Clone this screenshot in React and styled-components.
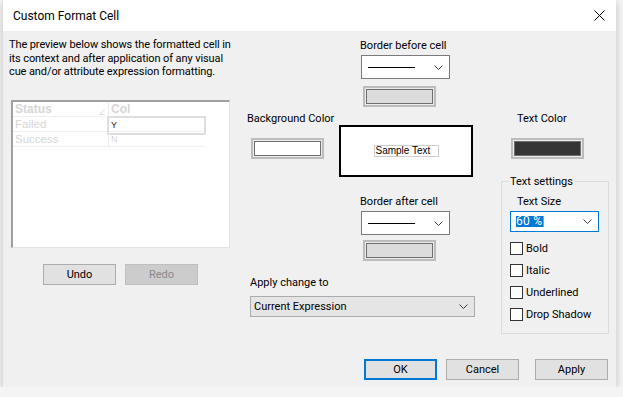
import React from 'react';
import styled, { createGlobalStyle } from 'styled-components';

const Global = createGlobalStyle`
  html, body { margin: 0; padding: 0; background: #f4f4f4; }
  body { font-family: Roboto, "Liberation Sans", sans-serif; font-size: 11px; color: #000; }
  * { box-sizing: border-box; }
`;

const Window = styled.div`
  margin-left: 3px;
  width: 613px;
  height: 387px;
  background: #f0f0f0;
  display: flex;
  flex-direction: column;
  box-shadow: 0 2px 8px rgba(0, 0, 0, 0.22);
`;

const TitleBar = styled.div`
  height: 31px;
  flex: none;
  background: #fff;
  display: flex;
  align-items: center;
  justify-content: space-between;
  padding: 0 11px 0 10px;
  font-size: 12px;
`;

const Body = styled.div`
  flex: 1;
  display: flex;
  flex-direction: column;
`;

const Main = styled.div`
  display: flex;
`;

const LeftPanel = styled.div`
  width: 243px;
  display: flex;
  flex-direction: column;
  padding-left: 6px;
`;

const Intro = styled.div`
  margin-top: 7px;
  line-height: 13.5px;
  white-space: nowrap;
  letter-spacing: -0.1px;
`;

const GridBox = styled.div`
  margin: 21px 0 0 2px;
  width: 219px;
  height: 148px;
  background: #fff;
  border-top: 2px solid #a0a0a0;
  border-left: 2px solid #a0a0a0;
  border-right: 1px solid #e3e3e3;
  border-bottom: 1px solid #e3e3e3;
  font-family: "Liberation Sans", sans-serif;
  font-size: 11px;
`;

const GridRow = styled.div`
  display: flex;
  height: 15px;
  width: 192px;
  border-bottom: 1px solid #f0f0f0;
`;

const GridCell = styled.div`
  width: ${(p) => p.$w}px;
  display: flex;
  align-items: center;
  justify-content: space-between;
  padding-left: 2px;
  color: ${(p) => p.$color || '#d6d6d6'};
  font-weight: ${(p) => (p.$bold ? 700 : 400)};
  font-size: ${(p) => (p.$small ? 9 : p.$bold ? 12 : 11.5)}px;
  border-left: ${(p) => (p.$divider ? '1px solid #ececec' : 'none')};
  outline: ${(p) => (p.$selected ? '2px solid #dedede' : 'none')};
  outline-offset: -1px;
  height: ${(p) => (p.$selected ? 17 : 15)}px;
`;

const ButtonRow = styled.div`
  display: flex;
  gap: 9px;
  margin: 16px 0 0 34px;
`;

const Button = styled.button`
  width: 73px;
  height: 21px;
  padding: 0;
  font-family: inherit;
  font-size: 11px;
  color: ${(p) => (p.disabled ? '#8a8a8a' : '#000')};
  background: ${(p) => (p.disabled ? '#cccccc' : '#e1e1e1')};
  border: ${(p) => (p.$default ? '2px solid #0078d7' : p.disabled ? '1px solid #bfbfbf' : '1px solid #adadad')};
  margin-left: ${(p) => p.$ml || 0}px;
`;

const CenterRegion = styled.div`
  width: 227px;
  display: flex;
  flex-direction: column;
`;

const BorderGroup = styled.div`
  display: flex;
  flex-direction: column;
  align-items: flex-start;
  margin: ${(p) => p.$top}px 0 0 115px;
`;

const Label = styled.div`
  line-height: 15px;
  white-space: nowrap;
  font-size: 11px;
  margin-left: ${(p) => p.$ml || 0}px;
  margin-top: ${(p) => p.$mt || 0}px;
`;

const LineSelect = styled.div`
  width: 89px;
  height: 24px;
  margin-top: ${(p) => p.$mt}px;
  background: #fff;
  border: 1px solid #7a7a7a;
  display: flex;
  align-items: center;
  justify-content: space-between;
  padding: 0 6px 0 6px;
`;

const LineSample = styled.div`
  width: 47px;
  height: 1px;
  background: #000;
`;

const ColorButton = styled.div`
  width: 73px;
  height: 21px;
  margin-top: ${(p) => p.$mt || 0}px;
  margin-left: ${(p) => p.$ml || 0}px;
  border: 2px solid #bcbcbc;
  padding: 1px;
  background: #ececec;
`;

const Swatch = styled.div`
  width: 100%;
  height: 100%;
  border: 1px solid #6e6e6e;
  background: ${(p) => p.$fill};
`;

const MidRow = styled.div`
  display: flex;
  margin-top: 3px;
`;

const ColorGroup = styled.div`
  width: ${(p) => p.$w}px;
  display: flex;
  flex-direction: column;
  align-items: flex-start;
  margin-top: ${(p) => p.$mt || 0}px;
`;

const Preview = styled.div`
  margin-top: 15px;
  width: 134px;
  height: 52px;
  background: #fff;
  border: 2px solid #000;
  display: flex;
  align-items: center;
  justify-content: center;
`;

const SampleText = styled.div`
  width: 65px;
  height: 12px;
  border: 1px solid #cfcfcf;
  font-family: "Liberation Sans", sans-serif;
  font-size: 10px;
  line-height: 10px;
  padding-left: 1px;
  white-space: nowrap;
`;

const ApplyCombo = styled.div`
  margin: 6px 0 0 4px;
  width: 225px;
  height: 21px;
  background: #e5e5e5;
  border: 1px solid #acacac;
  display: flex;
  align-items: center;
  justify-content: space-between;
  padding: 0 6px 0 3px;
  font-size: 11px;
`;

const RightColumn = styled.div`
  width: 108px;
  margin-left: 28px;
  display: flex;
  flex-direction: column;
`;

const Fieldset = styled.fieldset`
  margin: 15px 0 0 0;
  padding: 0 0 12px 8px;
  border: 1px solid #dcdcdc;
  min-width: 0;
  height: 160px;
`;

const Legend = styled.legend`
  padding: 0 1px;
  margin-left: -1px;
  line-height: 15px;
  font-size: 11px;
`;

const SizeCombo = styled.div`
  margin-top: 2px;
  width: 89px;
  height: 21px;
  background: #fff;
  border: 1px solid #0078d7;
  display: flex;
  align-items: center;
  justify-content: space-between;
  padding: 0 6px 0 5px;
  font-size: 12px;
`;

const Selected = styled.span`
  background: #0078d7;
  color: #fff;
  line-height: 11px;
  padding: 0 1px 0 0;
  letter-spacing: 0.3px;
  border-right: 1px solid #ff8c00;
`;

const CheckList = styled.div`
  margin-top: 10px;
  display: flex;
  flex-direction: column;
`;

const CheckRow = styled.label`
  display: flex;
  height: 22px;
  align-items: flex-start;
  font-size: 11px;
`;

const Box = styled.span`
  width: 13px;
  height: 13px;
  border: 1px solid #333;
  background: #fff;
  margin-right: 3px;
  flex: none;
`;

const CheckText = styled.span`
  line-height: 14px;
`;

const Footer = styled.div`
  margin-top: auto;
  display: flex;
  justify-content: flex-end;
  padding: 0 8px 7px 0;
`;

const Chevron = () => (
  <svg width="9" height="5" viewBox="0 0 9 5">
    <polyline points="0.5,0.5 4.5,4.5 8.5,0.5" fill="none" stroke="#3c3c3c" strokeWidth="1" />
  </svg>
);

const CloseIcon = () => (
  <svg width="11" height="11" viewBox="0 0 11 11">
    <path d="M0.5 0.5 L10.5 10.5 M10.5 0.5 L0.5 10.5" stroke="#000" strokeWidth="1" />
  </svg>
);

const SortGlyph = () => (
  <svg width="6" height="6" viewBox="0 0 6 6" style={{ marginRight: 3, marginTop: 6 }}>
    <path d="M5.5 0.5 L0.5 5.5 L5.5 5.5" fill="none" stroke="#dcdcdc" strokeWidth="1" />
  </svg>
);

export default function App() {
  return (
    <>
      <Global />
      <Window>
        <TitleBar>
          <span>Custom Format Cell</span>
          <CloseIcon />
        </TitleBar>
        <Body>
          <Main>
            <LeftPanel>
              <Intro>
                The preview below shows the formatted cell in
                <br />
                its context and after application of any visual
                <br />
                cue and/or attribute expression formatting.
              </Intro>
              <GridBox>
                <GridRow>
                  <GridCell $w={95} $bold>
                    Status
                    <SortGlyph />
                  </GridCell>
                  <GridCell $w={97} $bold $divider>Col</GridCell>
                </GridRow>
                <GridRow>
                  <GridCell $w={95}>Failed</GridCell>
                  <GridCell $w={97} $divider $selected $color="#222" $small>Y</GridCell>
                </GridRow>
                <GridRow>
                  <GridCell $w={95}>Success</GridCell>
                  <GridCell $w={97} $divider $small>N</GridCell>
                </GridRow>
              </GridBox>
              <ButtonRow>
                <Button>Undo</Button>
                <Button disabled>Redo</Button>
              </ButtonRow>
            </LeftPanel>

            <CenterRegion>
              <BorderGroup $top={7}>
                <Label $ml={-1}>Border before cell</Label>
                <LineSelect $mt={2}>
                  <LineSample />
                  <Chevron />
                </LineSelect>
                <ColorButton $mt={7} $ml={2}>
                  <Swatch $fill="#dcdcdc" />
                </ColorButton>
              </BorderGroup>

              <MidRow>
                <ColorGroup $w={93}>
                  <Label $ml={1} $mt={1}>Background Color</Label>
                  <ColorButton $mt={12} $ml={5}>
                    <Swatch $fill="#ffffff" />
                  </ColorButton>
                </ColorGroup>
                <Preview>
                  <SampleText>Sample Text</SampleText>
                </Preview>
              </MidRow>

              <BorderGroup $top={17}>
                <Label $ml={-1}>Border after cell</Label>
                <LineSelect $mt={2}>
                  <LineSample />
                  <Chevron />
                </LineSelect>
                <ColorButton $mt={5} $ml={2}>
                  <Swatch $fill="#dcdcdc" />
                </ColorButton>
              </BorderGroup>

              <Label $ml={4} $mt={14}>Apply change to</Label>
              <ApplyCombo>
                <span>Current Expression</span>
                <Chevron />
              </ApplyCombo>
            </CenterRegion>

            <RightColumn>
              <ColorGroup $w={108} $mt={80}>
                <Label $ml={16}>Text Color</Label>
                <ColorButton $mt={12} $ml={10}>
                  <Swatch $fill="#353535" />
                </ColorButton>
              </ColorGroup>
              <Fieldset>
                <Legend>Text settings</Legend>
                <Label $ml={7} $mt={5}>Text Size</Label>
                <SizeCombo>
                  <Selected>60 %</Selected>
                  <Chevron />
                </SizeCombo>
                <CheckList>
                  {['Bold', 'Italic', 'Underlined', 'Drop Shadow'].map((t) => (
                    <CheckRow key={t}>
                      <Box />
                      <CheckText>{t}</CheckText>
                    </CheckRow>
                  ))}
                </CheckList>
              </Fieldset>
            </RightColumn>
          </Main>
          <Footer>
            <Button $default>OK</Button>
            <Button $ml={9}>Cancel</Button>
            <Button $ml={16}>Apply</Button>
          </Footer>
        </Body>
      </Window>
    </>
  );
}
